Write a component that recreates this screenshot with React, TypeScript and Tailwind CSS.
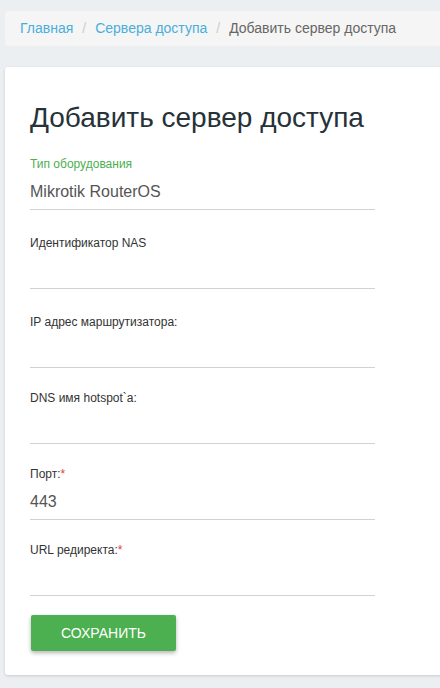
export default function App() {
  const font = { fontFamily: '"Liberation Sans", Arial, sans-serif' };

  return (
    <div className="min-h-[688px] w-[440px] overflow-hidden bg-[#eceff1] pl-[5px] pt-[11px]" style={font}>
      {/* Breadcrumb */}
      <nav className="-mr-4 flex h-[35px] items-center rounded-[3px] bg-[#f5f5f5] pl-[15px] text-[14px]">
        <a className="text-[#4aaedb]">Главная</a>
        <span className="px-[9px] text-[#cccccc]">/</span>
        <a className="text-[#4aaedb]">Сервера доступа</a>
        <span className="px-[9px] text-[#cccccc]">/</span>
        <span className="text-[#666666]">Добавить сервер доступа</span>
      </nav>

      {/* Card */}
      <div className="-mr-4 mt-[21px] h-[608px] rounded-[3px] bg-white pl-[25px] pt-[33px] shadow-[0_1px_3px_rgba(0,0,0,0.15)]">
        <h1 className="text-[28px] leading-[36px] text-[#263238]">Добавить сервер доступа</h1>

        <div className="w-[345px]">
          <Field className="mt-[20px]" label="Тип оборудования" active value="Mikrotik RouterOS" />
          <Field className="mt-[25px]" label="Идентификатор NAS" />
          <Field className="mt-[25px]" label="IP адрес маршрутизатора:" />
          <Field className="mt-[22px]" label="DNS имя hotspot`a:" />
          <Field className="mt-[22px]" label="Порт:" required value="443" />
          <Field className="mt-[22px]" label="URL редиректа:" required />

          <button className="ml-px mt-[19px] h-[36px] w-[145px] rounded-[2px] bg-[#4caf50] text-[14px] uppercase text-white shadow-[0_2px_4px_rgba(0,0,0,0.3)]">
            Сохранить
          </button>
        </div>
      </div>
    </div>
  );
}

function Field({
  label,
  value,
  active,
  required,
  className,
}: {
  label: string;
  value?: string;
  active?: boolean;
  required?: boolean;
  className?: string;
}) {
  return (
    <div className={className}>
      <div className={`h-[16px] text-[12px] leading-[16px] ${active ? 'text-[#4caf50]' : 'text-[#333333]'}`}>
        {label}
        {required && <span className="text-[#e53935]">*</span>}
      </div>
      <div className="mt-[2px] flex h-[36px] items-center border-b border-[#d2d2d2] text-[16px] text-[#555555]">
        {value}
      </div>
    </div>
  );
}
